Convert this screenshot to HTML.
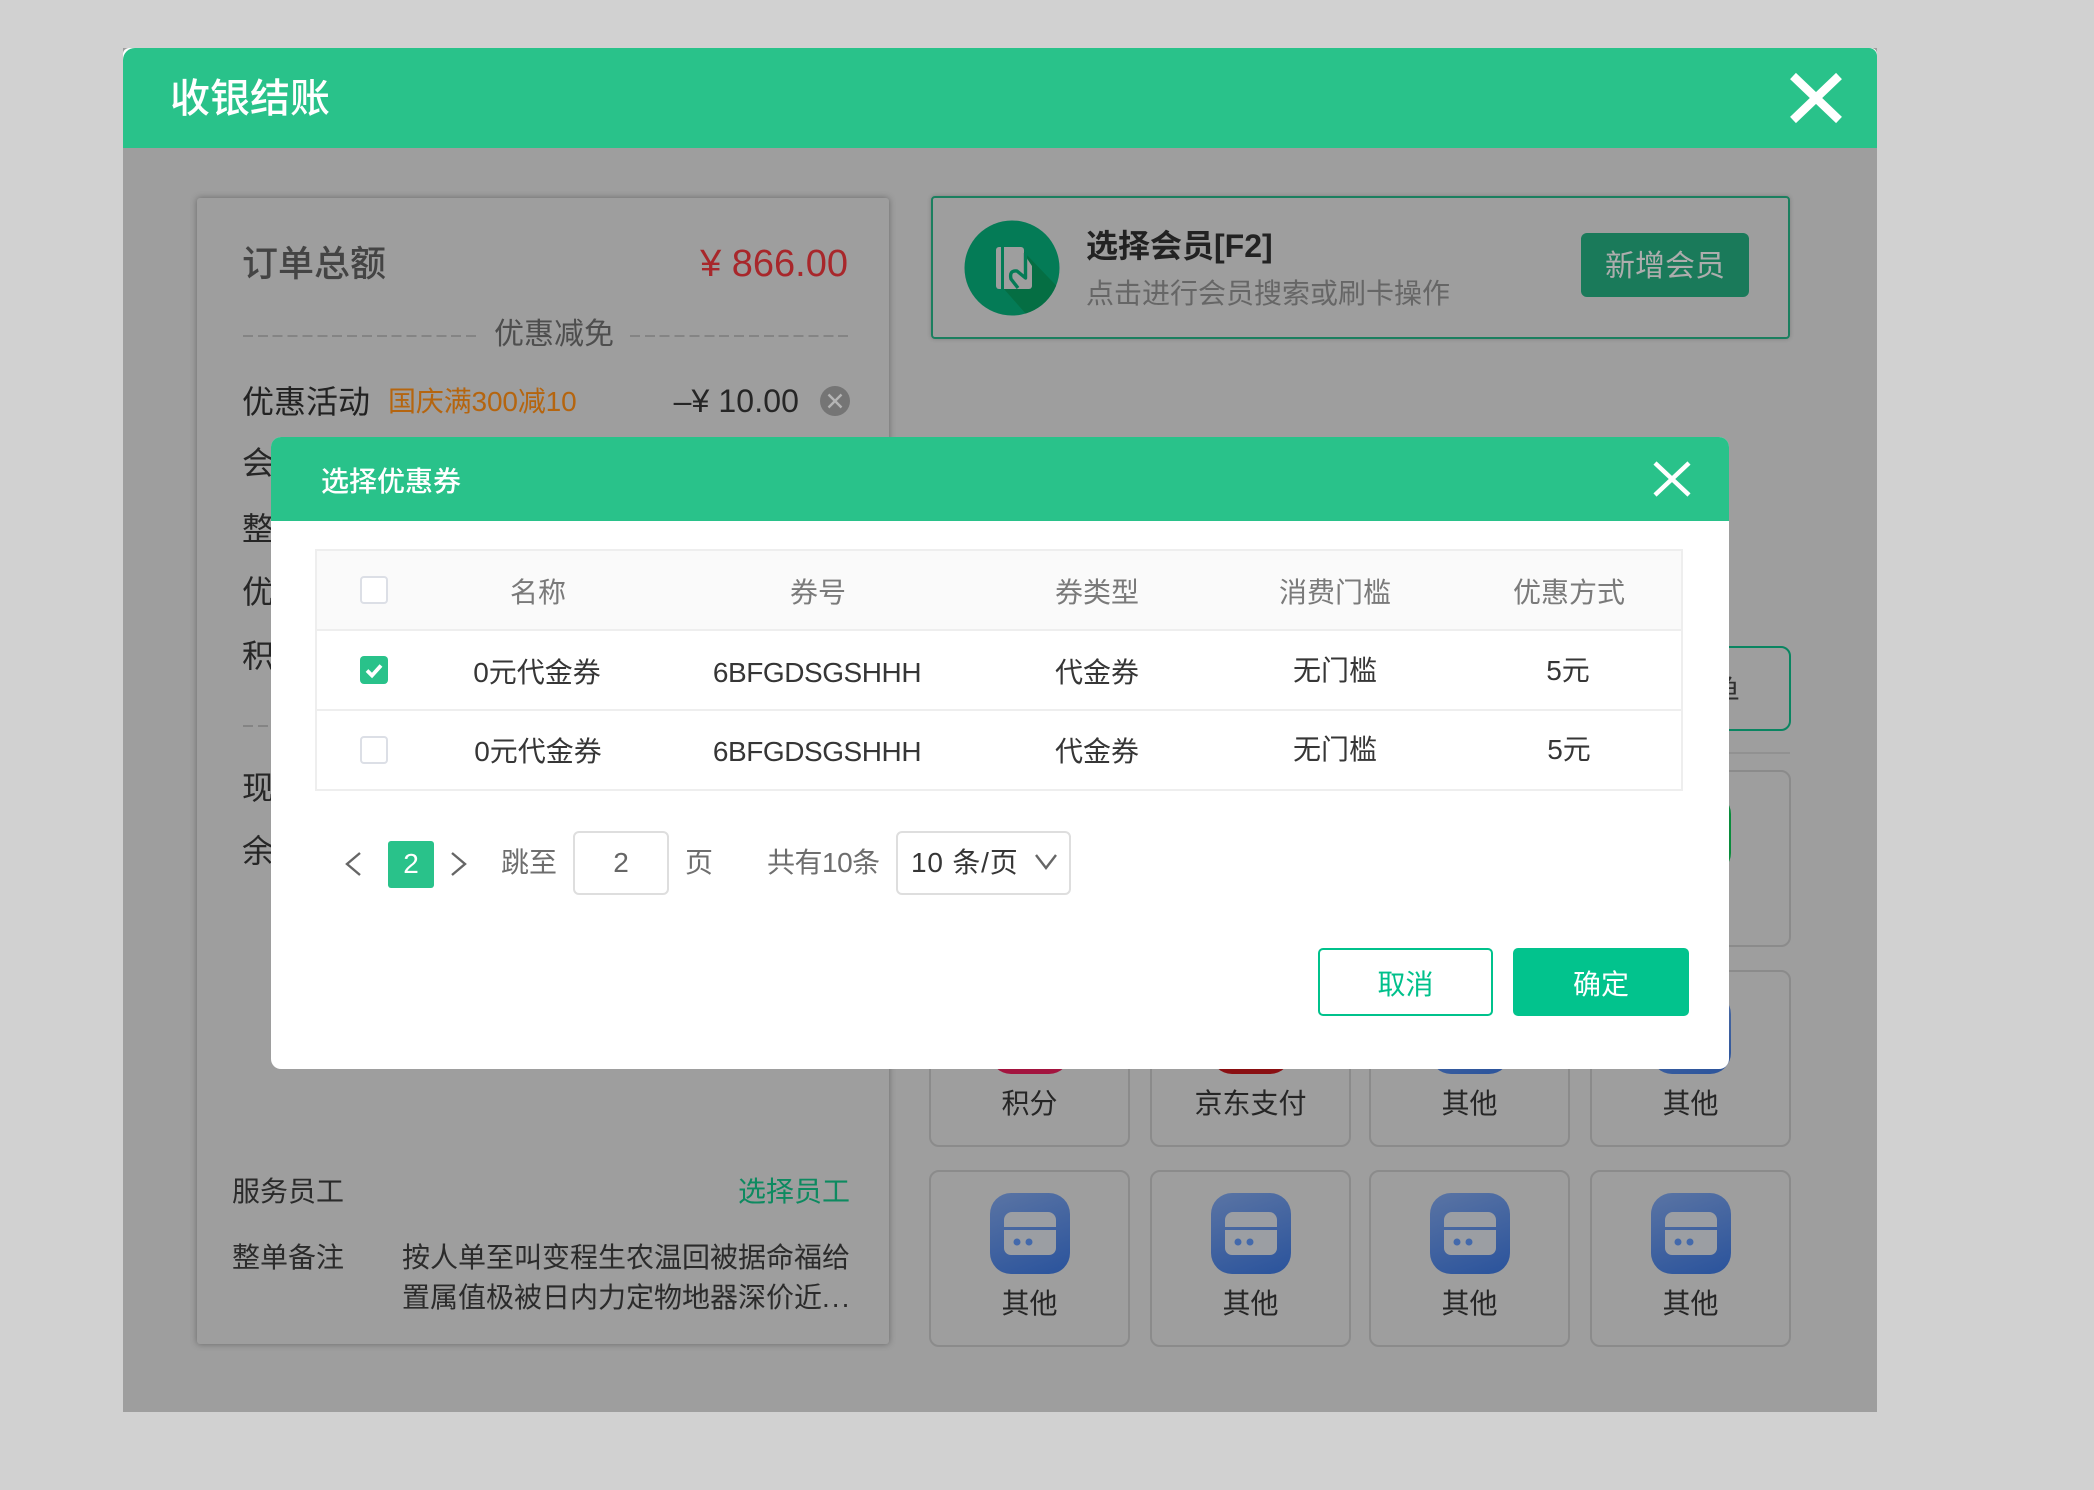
<!DOCTYPE html>
<html lang="zh-CN">
<head>
<meta charset="utf-8">
<title>收银结账</title>
<style>
html,body{margin:0;padding:0;width:2094px;height:1490px;overflow:hidden;background:#d1d1d1;}
body{position:relative;font-family:"Liberation Sans","Noto Sans CJK SC",sans-serif;}
div,span{box-sizing:border-box;}
.a{position:absolute;}
.t{position:absolute;white-space:nowrap;height:44px;line-height:44px;}
.c{transform:translateX(-50%);}
.r{text-align:right;}
.tile{position:absolute;width:201px;height:177px;border:2px solid #8b8b8b;border-radius:10px;}
.ic{position:absolute;left:59px;top:21px;width:80px;height:81px;border-radius:21px;}
.blue{background:linear-gradient(160deg,#5a74a4 0%,#2a539c 100%);}
.lbl{position:absolute;left:0;right:0;top:110px;text-align:center;font-size:28px;line-height:44px;color:#262626;}
.cd{position:absolute;left:14px;top:19px;width:52px;height:43px;}
.dash{position:absolute;height:2px;background:repeating-linear-gradient(90deg,#848484 0 10px,transparent 10px 14.87px);}
.cb{position:absolute;left:360px;width:28px;height:28px;border:2px solid #dcdfe6;border-radius:4px;background:#fff;}
.h{color:#7a7a7a;font-size:28px;}
.b{color:#363636;font-size:28px;}
</style>
</head>
<body>

<!-- main modal -->
<div class="a" style="left:123px;top:48px;width:1754px;height:1364px;background:#9e9e9e;">
  <div class="a" style="left:0;top:0;width:1754px;height:100px;background:#fff;border-radius:6px 6px 0 0;"></div>
  <div class="a" style="left:0;top:0;width:1754px;height:100px;background:#29c28a;border-radius:12px 8px 0 0;"></div>
</div>
<div class="t" style="left:170px;top:77px;font-size:40px;font-weight:500;color:#fff;">收银结账</div>
<svg class="a" style="left:1784px;top:67px" width="64" height="62" viewBox="0 0 64 62"><path d="M9 9 L55 53 M55 9 L9 53" stroke="#fff" stroke-width="8.5" fill="none"/></svg>

<!-- left card -->
<div class="a" style="left:197px;top:198px;width:692px;height:1146px;background:#9e9e9e;border-radius:3px;box-shadow:0 0 7px rgba(0,0,0,.35);"></div>
<div class="t" style="left:242px;top:242px;font-size:36px;font-weight:500;color:#444;">订单总额</div>
<div class="t" style="left:600px;width:248px;top:242px;font-size:38px;color:#a8272b;text-align:right;font-weight:500;">¥ 866.00</div>
<div class="dash" style="left:243px;top:335px;width:234px;"></div>
<div class="dash" style="left:630px;top:335px;width:219px;"></div>
<div class="t" style="left:494px;top:313px;font-size:30px;color:#4e4e4e;">优惠减免</div>
<div class="t" style="left:242px;top:380px;font-size:32px;color:#222;">优惠活动</div>
<div class="t" style="left:388px;top:380px;font-size:28px;color:#b5650f;letter-spacing:-.15px;">国庆满300减10</div>
<div class="t" style="left:620px;width:179px;top:379px;font-size:32px;color:#262626;text-align:right;letter-spacing:.1px;">–¥ 10.00</div>
<svg class="a" style="left:820px;top:386px" width="30" height="30" viewBox="0 0 30 30"><circle cx="15" cy="15" r="15" fill="#757575"/><path d="M8.5 8.5 L21.5 21.5 M21.5 8.5 L8.5 21.5" stroke="#b5b5b5" stroke-width="2.4"/></svg>

<div class="t" style="left:242px;top:441px;font-size:32px;color:#262626;">会员折扣</div>
<div class="t" style="left:242px;top:507px;font-size:32px;color:#262626;">整单折扣</div>
<div class="t" style="left:242px;top:570px;font-size:32px;color:#262626;">优惠券</div>
<div class="t" style="left:242px;top:634px;font-size:32px;color:#262626;">积分抵扣</div>
<div class="dash" style="left:243px;top:725px;width:100px;"></div>
<div class="t" style="left:242px;top:766px;font-size:32px;color:#262626;">现金</div>
<div class="t" style="left:242px;top:829px;font-size:32px;color:#262626;">余额</div>

<div class="t" style="left:232px;top:1170px;font-size:28px;color:#2b2b2b;">服务员工</div>
<div class="t" style="left:738px;top:1170px;font-size:28px;color:#0d8a60;">选择员工</div>
<div class="t" style="left:232px;top:1236px;font-size:28px;color:#2b2b2b;">整单备注</div>
<div class="t" style="left:402px;top:1236px;font-size:28px;color:#2b2b2b;">按人单至叫变程生农温回被据命福给</div>
<div class="t" style="left:402px;top:1276px;font-size:28px;color:#2b2b2b;">置属值极被日内力定物地器深价近<span style="letter-spacing:2px;">...</span></div>

<!-- member card -->
<div class="a" style="left:931px;top:196px;width:859px;height:143px;border:2px solid #1b7f5f;border-radius:4px;box-shadow:0 0 4px rgba(0,0,0,.2);"></div>
<svg class="a" style="left:964px;top:220px" width="96" height="96" viewBox="964 220 96 96">
  <defs><clipPath id="cc"><circle cx="1012" cy="268" r="47.5"/></clipPath></defs>
  <circle cx="1012" cy="268" r="47.5" fill="#047b56"/>
  <path d="M1024 252 L1070 300 L1040 330 L1004 289 Z" fill="#056e43" clip-path="url(#cc)"/>
  <path d="M1001 247 V289 H999 a3 3 0 0 1 -3 -3 V250 a3 3 0 0 1 3 -3 Z" fill="#9e9e9e"/>
  <path d="M1004 247 H1021 a3 3 0 0 1 3 3 V289 H1004 Z" fill="#9e9e9e"/>
  <path d="M1024 254 L1032 266 V286 a3 3 0 0 1 -3 3 H1020 V270 Z" fill="#9e9e9e"/>
  <path d="M1025.5 253 V278 L1017 271 Q1009 270 1011 279 L1018 288" stroke="#047b56" stroke-width="3.4" fill="none" stroke-linejoin="round"/>
</svg>
<div class="t" style="left:1086px;top:224px;font-size:32px;font-weight:700;color:#222;">选择会员[F2]</div>
<div class="t" style="left:1086px;top:272px;font-size:28px;color:#666;">点击进行会员搜索或刷卡操作</div>
<div class="a" style="left:1581px;top:233px;width:168px;height:64px;background:#1a7a5a;border-radius:6px;text-align:center;line-height:68px;font-size:30px;color:#adadad;">新增会员</div>

<!-- payment box behind dialog -->
<div class="a" style="left:931px;top:646px;width:860px;height:85px;border:2px solid #0a8561;border-radius:10px;"></div>
<div class="t" style="left:1712px;top:667px;font-size:28px;color:#2e2e2e;">鱼</div>
<div class="a" style="left:931px;top:752px;width:859px;height:2px;background:#919191;"></div>

<!-- tiles row 1 -->
<div class="tile" style="left:929px;top:770px;"></div>
<div class="tile" style="left:1150px;top:770px;"></div>
<div class="tile" style="left:1369px;top:770px;"></div>
<div class="tile" style="left:1590px;top:770px;"><div class="ic" style="background:#0a8c3c;"></div></div>
<!-- tiles row 2 -->
<div class="tile" style="left:929px;top:970px;"><div class="ic" style="background:#a3143f;"></div><div class="lbl">积分</div></div>
<div class="tile" style="left:1150px;top:970px;"><div class="ic" style="background:#8a0f12;"></div><div class="lbl">京东支付</div></div>
<div class="tile" style="left:1369px;top:970px;"><div class="ic blue"></div><div class="lbl">其他</div></div>
<div class="tile" style="left:1590px;top:970px;"><div class="ic blue"></div><div class="lbl">其他</div></div>
<!-- tiles row 3 -->
<div class="tile" style="left:929px;top:1170px;"><div class="ic blue"><svg class="cd" viewBox="0 0 52 43"><path d="M0 15 V8 a8 8 0 0 1 8 -8 H44 a8 8 0 0 1 8 8 V15 Z M0 18 H52 V36 a7 7 0 0 1 -7 7 H7 a7 7 0 0 1 -7 -7 Z" fill="#9b9ea3"/><circle cx="13" cy="30" r="3.5" fill="#4369ab"/><circle cx="25" cy="30" r="3.5" fill="#4369ab"/></svg></div><div class="lbl">其他</div></div>
<div class="tile" style="left:1150px;top:1170px;"><div class="ic blue"><svg class="cd" viewBox="0 0 52 43"><path d="M0 15 V8 a8 8 0 0 1 8 -8 H44 a8 8 0 0 1 8 8 V15 Z M0 18 H52 V36 a7 7 0 0 1 -7 7 H7 a7 7 0 0 1 -7 -7 Z" fill="#9b9ea3"/><circle cx="13" cy="30" r="3.5" fill="#4369ab"/><circle cx="25" cy="30" r="3.5" fill="#4369ab"/></svg></div><div class="lbl">其他</div></div>
<div class="tile" style="left:1369px;top:1170px;"><div class="ic blue"><svg class="cd" viewBox="0 0 52 43"><path d="M0 15 V8 a8 8 0 0 1 8 -8 H44 a8 8 0 0 1 8 8 V15 Z M0 18 H52 V36 a7 7 0 0 1 -7 7 H7 a7 7 0 0 1 -7 -7 Z" fill="#9b9ea3"/><circle cx="13" cy="30" r="3.5" fill="#4369ab"/><circle cx="25" cy="30" r="3.5" fill="#4369ab"/></svg></div><div class="lbl">其他</div></div>
<div class="tile" style="left:1590px;top:1170px;"><div class="ic blue"><svg class="cd" viewBox="0 0 52 43"><path d="M0 15 V8 a8 8 0 0 1 8 -8 H44 a8 8 0 0 1 8 8 V15 Z M0 18 H52 V36 a7 7 0 0 1 -7 7 H7 a7 7 0 0 1 -7 -7 Z" fill="#9b9ea3"/><circle cx="13" cy="30" r="3.5" fill="#4369ab"/><circle cx="25" cy="30" r="3.5" fill="#4369ab"/></svg></div><div class="lbl">其他</div></div>

<!-- dialog -->
<div class="a" style="left:271px;top:437px;width:1458px;height:632px;background:#fff;border-radius:10px;overflow:hidden;">
  <div class="a" style="left:0;top:0;width:1458px;height:84px;background:#29c28a;"></div>
</div>
<div class="t" style="left:321px;top:460px;font-size:28px;font-weight:500;color:#fff;">选择优惠券</div>
<svg class="a" style="left:1650px;top:459px" width="44" height="40" viewBox="0 0 44 40"><path d="M5 4 L39 36 M39 4 L5 36" stroke="#fff" stroke-width="4.5" fill="none"/></svg>

<!-- table -->
<div class="a" style="left:315px;top:549px;width:1368px;height:242px;border:2px solid #eeeeee;"></div>
<div class="a" style="left:317px;top:551px;width:1364px;height:78px;background:#fafafa;"></div>
<div class="a" style="left:317px;top:629px;width:1364px;height:2px;background:#eeeeee;"></div>
<div class="a" style="left:317px;top:709px;width:1364px;height:2px;background:#eeeeee;"></div>

<div class="cb" style="top:576px;"></div>
<div class="a" style="left:360px;top:656px;width:28px;height:28px;background:#29c28a;border-radius:4px;"></div>
<svg class="a" style="left:360px;top:656px" width="28" height="28" viewBox="0 0 28 28"><path d="M7 14.5 L12 19.5 L21 9.5" stroke="#fff" stroke-width="3.8" fill="none"/></svg>
<div class="cb" style="top:736px;"></div>

<div class="t c h" style="left:538px;top:571px;">名称</div>
<div class="t c h" style="left:818px;top:571px;">券号</div>
<div class="t c h" style="left:1097px;top:571px;">券类型</div>
<div class="t c h" style="left:1335px;top:571px;">消费门槛</div>
<div class="t c h" style="left:1569px;top:571px;">优惠方式</div>

<div class="t c b" style="left:537px;top:651px;">0元代金券</div>
<div class="t c b" style="left:817px;top:651px;letter-spacing:-.45px;">6BFGDSGSHHH</div>
<div class="t c b" style="left:1097px;top:651px;">代金券</div>
<div class="t c b" style="left:1335px;top:649px;">无门槛</div>
<div class="t c b" style="left:1568px;top:649px;">5元</div>

<div class="t c b" style="left:538px;top:730px;">0元代金券</div>
<div class="t c b" style="left:817px;top:730px;letter-spacing:-.45px;">6BFGDSGSHHH</div>
<div class="t c b" style="left:1097px;top:730px;">代金券</div>
<div class="t c b" style="left:1335px;top:728px;">无门槛</div>
<div class="t c b" style="left:1569px;top:728px;">5元</div>

<!-- pagination -->
<svg class="a" style="left:341px;top:849px" width="24" height="30" viewBox="0 0 24 30"><path d="M19 4 L6 15 L19 26" stroke="#666" stroke-width="2.4" fill="none"/></svg>
<div class="a" style="left:388px;top:841px;width:46px;height:47px;background:#29c28a;border-radius:3px;text-align:center;line-height:45px;font-size:28px;color:#fff;">2</div>
<svg class="a" style="left:447px;top:849px" width="24" height="30" viewBox="0 0 24 30"><path d="M5 4 L18 15 L5 26" stroke="#666" stroke-width="2.4" fill="none"/></svg>
<div class="t" style="left:501px;top:841px;font-size:28px;color:#6e6e6e;">跳至</div>
<div class="a" style="left:573px;top:831px;width:96px;height:64px;border:2px solid #dedede;border-radius:6px;text-align:center;line-height:60px;font-size:28px;color:#666;">2</div>
<div class="t" style="left:685px;top:841px;font-size:28px;color:#6e6e6e;">页</div>
<div class="t" style="left:767px;top:841px;font-size:28px;color:#6e6e6e;letter-spacing:-.5px;">共有10条</div>
<div class="a" style="left:896px;top:831px;width:175px;height:64px;border:2px solid #dedede;border-radius:6px;"></div>
<div class="t" style="left:911px;top:841px;font-size:28px;color:#363636;letter-spacing:.8px;">10 条/页</div>
<svg class="a" style="left:1032px;top:851px" width="28" height="22" viewBox="0 0 28 22"><path d="M4 4 L14 17 L24 4" stroke="#666" stroke-width="2.4" fill="none"/></svg>

<!-- buttons -->
<div class="a" style="left:1318px;top:948px;width:175px;height:68px;border:2px solid #00c28c;border-radius:5px;background:#fff;text-align:center;line-height:70px;font-size:28px;color:#00c08b;">取消</div>
<div class="a" style="left:1513px;top:948px;width:176px;height:68px;background:#02c38d;border-radius:5px;text-align:center;line-height:74px;font-size:28px;color:#fff;">确定</div>

</body>
</html>
